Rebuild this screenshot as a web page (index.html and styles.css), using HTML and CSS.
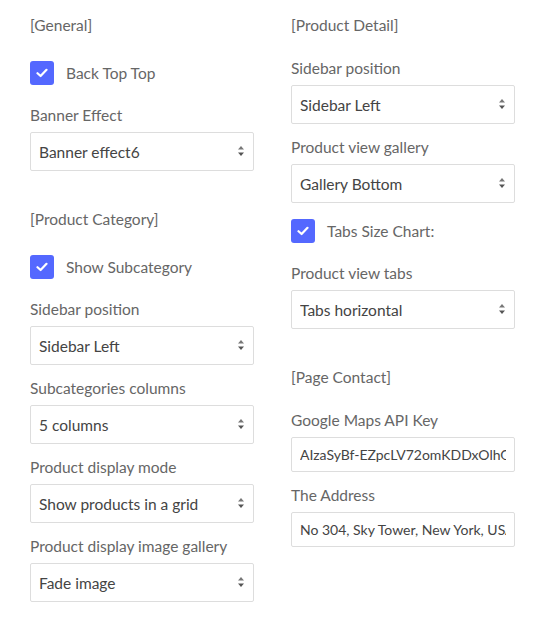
FILE: index.html
```html
<!DOCTYPE html>
<html>
<head>
<meta charset="utf-8">
<link rel="stylesheet" href="styles.css">
</head>
<body>
<div class="page">
  <div class="col">
    <section class="section">
      <div class="heading">[General]</div>
      <label class="check-row"><span class="check"><svg width="12" height="10" viewBox="0 0 12 10"><path d="M1.5 5.2 L4.6 8 L10.5 1.8" fill="none" stroke="#fff" stroke-width="2.2" stroke-linecap="round" stroke-linejoin="round"/></svg></span><span class="check-text">Back Top Top</span></label>
      <div class="field">
        <div class="label">Banner Effect</div>
        <div class="select-wrap"><select class="select"><option>Banner effect6</option></select><svg class="arrows" width="8" height="12" viewBox="0 0 8 12"><path d="M4 1 L7 4.5 L1 4.5 Z" fill="#777"/><path d="M1 7.5 L7 7.5 L4 11 Z" fill="#555"/></svg></div>
      </div>
    </section>
    <section class="section">
      <div class="heading">[Product Category]</div>
      <label class="check-row"><span class="check"><svg width="12" height="10" viewBox="0 0 12 10"><path d="M1.5 5.2 L4.6 8 L10.5 1.8" fill="none" stroke="#fff" stroke-width="2.2" stroke-linecap="round" stroke-linejoin="round"/></svg></span><span class="check-text">Show Subcategory</span></label>
      <div class="field">
        <div class="label">Sidebar position</div>
        <div class="select-wrap"><select class="select"><option>Sidebar Left</option></select><svg class="arrows" width="8" height="12" viewBox="0 0 8 12"><path d="M4 1 L7 4.5 L1 4.5 Z" fill="#777"/><path d="M1 7.5 L7 7.5 L4 11 Z" fill="#555"/></svg></div>
      </div>
      <div class="field">
        <div class="label">Subcategories columns</div>
        <div class="select-wrap"><select class="select"><option>5 columns</option></select><svg class="arrows" width="8" height="12" viewBox="0 0 8 12"><path d="M4 1 L7 4.5 L1 4.5 Z" fill="#777"/><path d="M1 7.5 L7 7.5 L4 11 Z" fill="#555"/></svg></div>
      </div>
      <div class="field">
        <div class="label">Product display mode</div>
        <div class="select-wrap"><select class="select"><option>Show products in a grid</option></select><svg class="arrows" width="8" height="12" viewBox="0 0 8 12"><path d="M4 1 L7 4.5 L1 4.5 Z" fill="#777"/><path d="M1 7.5 L7 7.5 L4 11 Z" fill="#555"/></svg></div>
      </div>
      <div class="field">
        <div class="label">Product display image gallery</div>
        <div class="select-wrap"><select class="select"><option>Fade image</option></select><svg class="arrows" width="8" height="12" viewBox="0 0 8 12"><path d="M4 1 L7 4.5 L1 4.5 Z" fill="#777"/><path d="M1 7.5 L7 7.5 L4 11 Z" fill="#555"/></svg></div>
      </div>
    </section>
  </div>
  <div class="col">
    <section class="section">
      <div class="heading">[Product Detail]</div>
      <div class="field">
        <div class="label">Sidebar position</div>
        <div class="select-wrap"><select class="select"><option>Sidebar Left</option></select><svg class="arrows" width="8" height="12" viewBox="0 0 8 12"><path d="M4 1 L7 4.5 L1 4.5 Z" fill="#777"/><path d="M1 7.5 L7 7.5 L4 11 Z" fill="#555"/></svg></div>
      </div>
      <div class="field">
        <div class="label">Product view gallery</div>
        <div class="select-wrap"><select class="select"><option>Gallery Bottom</option></select><svg class="arrows" width="8" height="12" viewBox="0 0 8 12"><path d="M4 1 L7 4.5 L1 4.5 Z" fill="#777"/><path d="M1 7.5 L7 7.5 L4 11 Z" fill="#555"/></svg></div>
      </div>
      <label class="check-row"><span class="check"><svg width="12" height="10" viewBox="0 0 12 10"><path d="M1.5 5.2 L4.6 8 L10.5 1.8" fill="none" stroke="#fff" stroke-width="2.2" stroke-linecap="round" stroke-linejoin="round"/></svg></span><span class="check-text">Tabs Size Chart:</span></label>
      <div class="field">
        <div class="label">Product view tabs</div>
        <div class="select-wrap"><select class="select"><option>Tabs horizontal</option></select><svg class="arrows" width="8" height="12" viewBox="0 0 8 12"><path d="M4 1 L7 4.5 L1 4.5 Z" fill="#777"/><path d="M1 7.5 L7 7.5 L4 11 Z" fill="#555"/></svg></div>
      </div>
    </section>
    <section class="section">
      <div class="heading">[Page Contact]</div>
      <div class="field">
        <div class="label">Google Maps API Key</div>
        <input class="input" type="text" value="AIzaSyBf-EZpcLV72omKDDxOlhG0p4DlrzYrQvc">
      </div>
      <div class="field">
        <div class="label">The Address</div>
        <input class="input" type="text" value="No 304, Sky Tower, New York, USA">
      </div>
    </section>
  </div>
</div>
</body>
</html>
```

FILE: styles.css
```css
* { box-sizing: border-box; }
html, body { margin: 0; padding: 0; background: #fff; }
body {
  font-family: Lato, "Liberation Sans", sans-serif;
  font-size: 15.5px;
  color: #666;
}
.page {
  display: flex;
  gap: 37px;
  padding: 14px 30px 0 30px;
}
.col {
  width: 224px;
  display: flex;
  flex-direction: column;
}
.section {
  display: flex;
  flex-direction: column;
  margin-bottom: 24px;
}
.heading {
  line-height: 22px;
  margin-bottom: 22px;
  color: #666;
}
.check-row {
  display: flex;
  align-items: center;
  gap: 12px;
  height: 30px;
  margin-bottom: 17px;
}
.check {
  width: 24px;
  height: 24px;
  border-radius: 3px;
  background: #5468ff;
  display: flex;
  align-items: center;
  justify-content: center;
}
.check-text { color: #666; line-height: 22px; }
.field {
  display: flex;
  flex-direction: column;
  margin-bottom: 13px;
}
.label {
  line-height: 22px;
  margin-bottom: 5px;
  margin-top: -1px;
  padding-bottom: 1px;
  color: #666;
}
.select-wrap {
  position: relative;
  height: 39px;
}
.select {
  -webkit-appearance: none;
  appearance: none;
  width: 100%;
  height: 39px;
  border: 1px solid #ddd;
  border-radius: 2px;
  background: #fff;
  padding: 0 24px 0 8px;
  font-family: inherit;
  font-size: 15.5px;
  color: #444;
  outline: none;
}
.arrows {
  position: absolute;
  right: 9px;
  top: 13px;
  pointer-events: none;
}
.input {
  width: 100%;
  height: 35px;
  border: 1px solid #ddd;
  border-radius: 2px;
  padding: 0 8px;
  font-family: inherit;
  font-size: 14px;
  color: #444;
  background: #fff;
  outline: none;
}
```
